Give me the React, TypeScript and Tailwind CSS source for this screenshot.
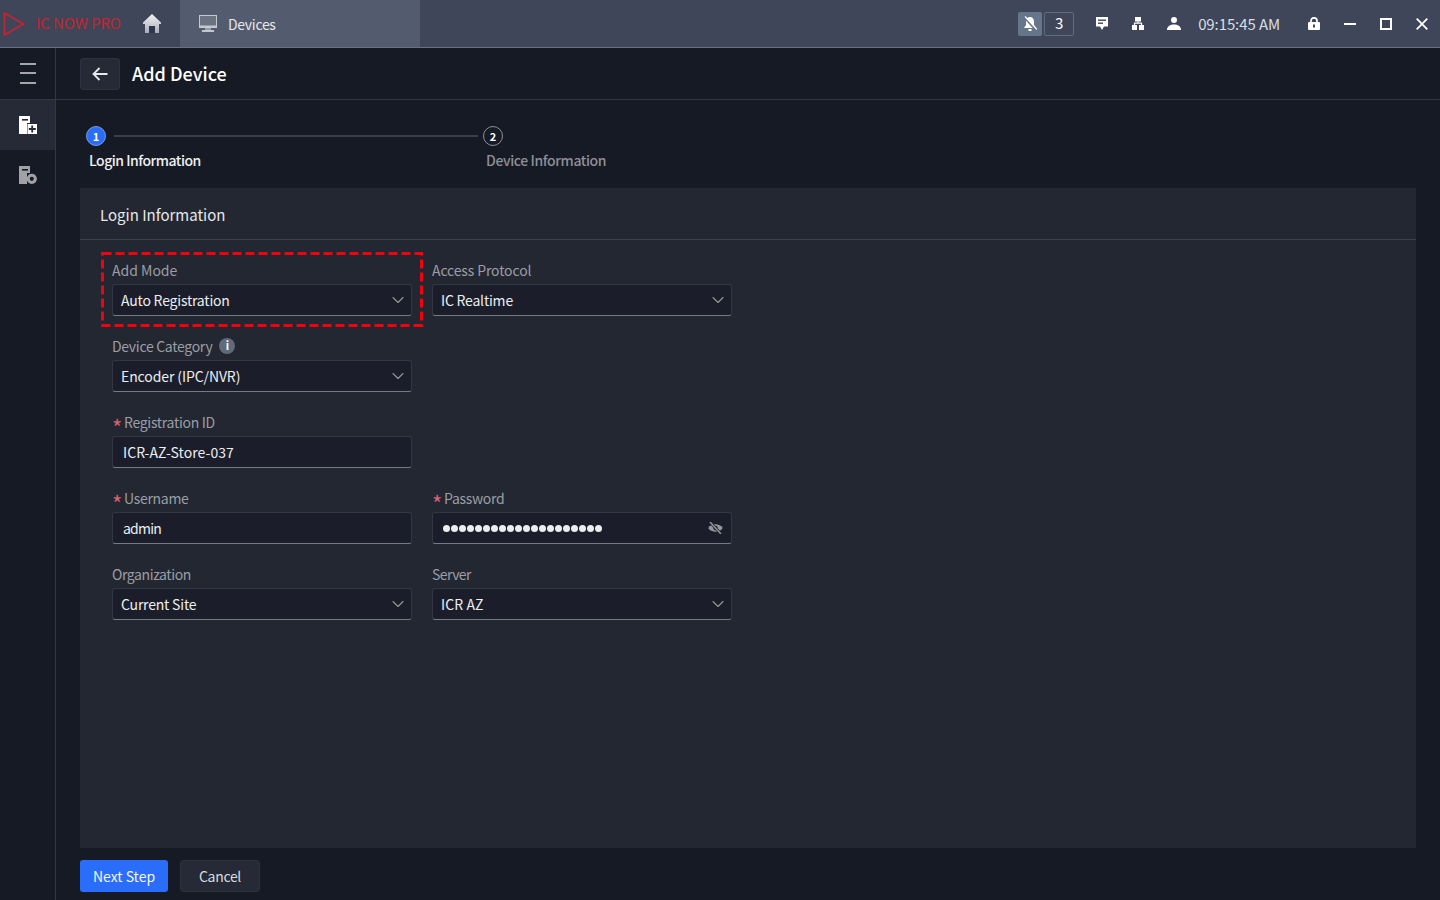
import { ChevronDown } from "lucide-react";
import React from "react";

const font = { fontFamily: '"Noto Sans CJK SC", "Noto Sans", sans-serif' };

function HomeIcon() {
  return (
    <svg width="18" height="19" viewBox="0 0 18 19" className="block">
      <defs>
        <linearGradient id="homeFill" x1="0" y1="0" x2="0" y2="1">
          <stop offset="0" stopColor="#f2f3f5" />
          <stop offset="1" stopColor="#a9adb6" />
        </linearGradient>
      </defs>
      <path d="M9 0 L18 8.5 L18 10 L16 10 V19 H2 V10 L0 10 L0 8.5 Z" fill="url(#homeFill)" />
      <rect x="6" y="12" width="6" height="7" fill="#2f3850" />
    </svg>
  );
}

function MonitorIcon() {
  return (
    <svg width="18" height="18" viewBox="0 0 18 18" className="block">
      <rect x="0.5" y="0.5" width="17" height="12" fill="#6b7282" stroke="#c4c7cd" />
      <rect x="0" y="10.5" width="18" height="2.5" fill="#c4c7cd" />
      <rect x="6" y="13" width="6" height="2" fill="#9a9ea8" />
      <rect x="3" y="15" width="12" height="2" fill="#c4c7cd" />
    </svg>
  );
}

function BellOff() {
  return (
    <svg width="14" height="16" viewBox="0 0 14 16" className="block">
      <path d="M7 1 C4 1 3 3.5 3 6 V9 L1 12 H13 L11 9 V6 C11 3.5 10 1 7 1 Z" fill="#fff" />
      <rect x="5.5" y="13" width="3" height="2" fill="#fff" />
      <path d="M1 1 L13 14" stroke="#64748b" strokeWidth="2" />
      <path d="M2 0.5 L14 13.5" stroke="#fff" strokeWidth="1.2" />
    </svg>
  );
}

function ChatIcon() {
  return (
    <svg width="12" height="13" viewBox="0 0 12 13" className="block">
      <path d="M0 0 H12 V9.5 H8 L6 13 L4 9.5 H0 Z" fill="#fff" />
      <rect x="2" y="2.5" width="8" height="1.4" fill="#3f4659" />
      <rect x="2" y="5.5" width="5" height="1.4" fill="#3f4659" />
    </svg>
  );
}

function NetIcon() {
  return (
    <svg width="12" height="13" viewBox="0 0 12 13" className="block">
      <rect x="3" y="0" width="6" height="4.5" fill="#fff" />
      <path d="M2.5 9 V6.2 H9.5 V9 M6 4.5 V6.2" stroke="#fff" strokeWidth="1.2" fill="none" />
      <rect x="0" y="8" width="5" height="5" fill="#fff" />
      <rect x="7" y="8" width="5" height="5" fill="#fff" />
    </svg>
  );
}

function UserIcon() {
  return (
    <svg width="14" height="13" viewBox="0 0 14 13" className="block">
      <circle cx="7" cy="3" r="3" fill="#fff" />
      <path d="M0 13 C0 9 3.5 7.5 7 7.5 C10.5 7.5 14 9 14 13 Z" fill="#fff" />
    </svg>
  );
}

function LockIcon() {
  return (
    <svg width="12" height="13" viewBox="0 0 12 13" className="block">
      <path d="M3 6 V3.8 C3 -0.2 9 -0.2 9 3.8 V6" stroke="#fff" strokeWidth="1.7" fill="none" />
      <rect x="0" y="5" width="12" height="8" rx="1" fill="#fff" />
      <rect x="5" y="7.5" width="2" height="3" fill="#3f4659" />
    </svg>
  );
}

function MinusIcon() {
  return (
    <svg width="12" height="12" viewBox="0 0 12 12" className="block">
      <rect x="0" y="5" width="12" height="2" fill="#fff" />
    </svg>
  );
}

function SquareIcon() {
  return (
    <svg width="12" height="12" viewBox="0 0 12 12" className="block">
      <rect x="1" y="1" width="10" height="10" fill="none" stroke="#fff" strokeWidth="2" />
    </svg>
  );
}

function CloseIcon() {
  return (
    <svg width="12" height="12" viewBox="0 0 12 12" className="block">
      <path d="M0.7 0.7 L11.3 11.3 M11.3 0.7 L0.7 11.3" stroke="#fff" strokeWidth="1.8" />
    </svg>
  );
}

function MenuIcon() {
  return (
    <svg width="16" height="21" viewBox="0 0 16 21" className="block">
      <rect y="0" width="16" height="2" fill="#a4a6ab" />
      <rect y="9" width="16" height="2" fill="#a4a6ab" />
      <rect y="19" width="16" height="2" fill="#a4a6ab" />
    </svg>
  );
}

function DeviceAddIcon() {
  return (
    <svg width="18" height="18" viewBox="0 0 18 18" className="block">
      <path d="M0 0 H11 V7 H8 V18 H0 Z" fill="#fff" />
      <rect x="3" y="3" width="6" height="1.6" fill="#262a36" />
      <rect x="8.5" y="8" width="9.5" height="10" fill="#fff" />
      <path d="M13.2 9.5 V16.5 M9.8 13 H16.8" stroke="#262a36" strokeWidth="1.8" />
    </svg>
  );
}

function DeviceGearIcon() {
  return (
    <svg width="18" height="18" viewBox="0 0 18 18" className="block">
      <path d="M0 0 H11 V7 H8 V18 H0 Z" fill="#a0a2a7" />
      <rect x="3" y="3" width="6" height="1.6" fill="#161a25" />
      <circle cx="12.8" cy="12.8" r="3.6" fill="none" stroke="#a0a2a7" strokeWidth="3" />
    </svg>
  );
}

function EyeOff() {
  return (
    <svg width="15" height="12" viewBox="0 0 15 12" className="block">
      <path d="M0.3 6 C3 1 12 1 14.7 6 C12 11 3 11 0.3 6 Z" fill="#93969c" />
      <circle cx="7.5" cy="6" r="2.2" fill="#1b1e2a" />
      <path d="M2 0 L13 12" stroke="#1b1e2a" strokeWidth="2.8" />
      <path d="M2 0 L13 12" stroke="#93969c" strokeWidth="1.5" />
    </svg>
  );
}

function Label({
  text,
  required,
  info,
  className = "tracking-[-0.3px]",
}: {
  text: string;
  required?: boolean;
  info?: boolean;
  className?: string;
}) {
  return (
    <div className="h-6 flex items-center text-sm text-[#9b9ea5]">
      {required && <span className="w-3 text-[22px] leading-none pt-[7px] text-[#d9606c]">*</span>}
      <span className={className}>{text}</span>
      {info && (
        <span className="ml-[7px] w-4 h-4 rounded-full bg-[#5f6b7a] text-white text-[11px] font-bold flex items-center justify-center">
          i
        </span>
      )}
    </div>
  );
}

function SelectField({
  label,
  value,
  info,
  labelClass,
  valueClass = "tracking-[-0.2px]",
}: {
  label: string;
  value: string;
  info?: boolean;
  labelClass?: string;
  valueClass?: string;
}) {
  return (
    <div className="w-[300px]">
      <Label text={label} info={info} className={labelClass} />
      <div className="mt-[2px] h-8 pl-2 pr-[3px] flex items-center justify-between rounded-[3px] border border-[#333743] border-b-[#777b85] bg-[#1b1e2a] text-sm text-[#eceef0]">
        <span className={valueClass}>{value}</span>
        <ChevronDown size={20} strokeWidth={1.3} className="text-[#94969b]" />
      </div>
    </div>
  );
}

function InputField({
  label,
  value,
  required,
  valueClass,
}: {
  label: string;
  value: string;
  required?: boolean;
  valueClass?: string;
}) {
  return (
    <div className="w-[300px]">
      <Label text={label} required={required} />
      <div className="mt-[2px] h-8 px-[10px] flex items-center rounded-[3px] border border-[#333743] border-b-[#777b85] bg-[#1b1e2a] text-sm text-[#eceef0]">
        <span className={valueClass}>{value}</span>
      </div>
    </div>
  );
}

export default function App() {
  return (
    <div className="w-[1440px] h-[900px] flex flex-col bg-[#161a25] overflow-hidden" style={font}>
      <div className="h-12 shrink-0 flex items-center bg-[#3f4659] border-b border-[#697082]">
        <div className="w-[180px] h-full flex items-center">
          <svg width="22" height="26" viewBox="0 0 22 26" className="block ml-[3px]">
            <path d="M1.5 2 L20.5 13 L1.5 24 Z" fill="none" stroke="#c4242f" strokeWidth="2" strokeLinejoin="round" />
          </svg>
          <span className="ml-[11px] text-[15px] tracking-[-0.1px] text-[#c4242f]">IC NOW PRO</span>
          <span className="ml-[22px]">
            <HomeIcon />
          </span>
        </div>
        <div className="w-[240px] h-full pl-[19px] flex items-center bg-[#535b6e] text-sm text-[#e6e8ea]">
          <MonitorIcon />
          <span className="ml-[11px] tracking-[-0.3px]">Devices</span>
        </div>
        <div className="flex-1 flex items-center justify-end pr-3 text-white">
          <div className="w-6 h-6 bg-[#66768a] rounded-[2px] flex items-center justify-center">
            <BellOff />
          </div>
          <div className="ml-[2px] w-[30px] h-6 rounded-[2px] border border-[#5d6c80] flex items-center justify-center text-[15px]">
            3
          </div>
          <span className="ml-[22px]"><ChatIcon /></span>
          <span className="ml-6"><NetIcon /></span>
          <span className="ml-[23px]"><UserIcon /></span>
          <span className="ml-[17px] pt-[2px] text-[15px] tracking-[-0.1px] text-[#d9dde3]">09:15:45 AM</span>
          <span className="ml-7"><LockIcon /></span>
          <span className="ml-6"><MinusIcon /></span>
          <span className="ml-6"><SquareIcon /></span>
          <span className="ml-6"><CloseIcon /></span>
        </div>
      </div>

      <div className="flex-1 flex min-h-0">
        <div className="w-14 shrink-0 border-r border-[#333743] flex flex-col">
          <div className="h-[52px] border-b border-[#333743] flex items-center justify-center">
            <MenuIcon />
          </div>
          <div className="h-[50px] bg-[#262a36] flex items-center justify-center">
            <DeviceAddIcon />
          </div>
          <div className="h-[50px] flex items-center justify-center">
            <DeviceGearIcon />
          </div>
        </div>

        <div className="flex-1 flex flex-col min-w-0">
          <div className="h-[52px] shrink-0 border-b border-[#333743] pl-6 flex items-center">
            <div className="w-10 h-8 rounded-[3px] bg-[#262a36] border border-[#2e323e] flex items-center justify-center">
              <svg width="16" height="14" viewBox="0 0 16 14" className="block">
                <path d="M15.5 7 H1.5 M7.5 1 L1.5 7 L7.5 13" fill="none" stroke="#e8e9eb" strokeWidth="1.8" />
              </svg>
            </div>
            <span className="ml-3 pb-[2px] text-lg font-medium text-white">Add Device</span>
          </div>

          <div className="h-[88px] shrink-0 pl-[30px] pt-[26px]">
            <div className="flex items-center">
              <div className="w-5 h-5 rounded-full bg-[#2a6dfb] border border-[#7a9ad8] text-white text-[11px] font-bold flex items-center justify-center">
                1
              </div>
              <div className="ml-2 w-[364px] h-[2px] bg-[#3a3e49]" />
              <div className="ml-[5px] w-5 h-5 rounded-full border border-[#8d9096] text-white text-[11px] font-bold flex items-center justify-center">
                2
              </div>
            </div>
            <div className="mt-1 flex text-sm font-medium">
              <span className="ml-[3px] w-[397px] tracking-[-0.5px] text-[#eef0f2]">Login Information</span>
              <span className="tracking-[-0.4px] text-[#8d9096]">Device Information</span>
            </div>
          </div>

          <div className="mx-6 h-[660px] shrink-0 bg-[#232732] flex flex-col">
            <div className="h-[52px] shrink-0 pl-5 pt-1 flex items-center border-b border-[#3b3f4a] text-[15px] text-[#e6e8ea]">
              Login Information
            </div>
            <div className="relative pl-8 pt-[18px] flex flex-col gap-[18px]">
              <svg width="322" height="75" viewBox="0 0 322 75" className="absolute left-[21px] top-3 block">
                <rect x="1.5" y="1.5" width="319" height="72" fill="none" stroke="#f5000f" strokeWidth="3" strokeDasharray="9 4" />
              </svg>
              <div className="flex gap-5">
                <SelectField label="Add Mode" value="Auto Registration" labelClass="tracking-normal" />
                <SelectField label="Access Protocol" value="IC Realtime" labelClass="tracking-[-0.13px]" />
              </div>
              <SelectField label="Device Category" value="Encoder (IPC/NVR)" valueClass="tracking-[-0.1px]" info />
              <InputField label="Registration ID" value="ICR-AZ-Store-037" required valueClass="tracking-[0.05px]" />
              <div className="flex gap-5">
                <InputField label="Username" value="admin" required valueClass="tracking-[-0.8px]" />
                <div className="w-[300px]">
                  <Label text="Password" required />
                  <div className="mt-[2px] h-8 pl-[10px] pr-2 flex items-center justify-between rounded-[3px] border border-[#333743] border-b-[#777b85] bg-[#1b1e2a]">
                    <div className="flex gap-px">
                      {Array.from({ length: 20 }).map((_, i) => (
                        <span key={i} className="w-[7px] h-[7px] rounded-full bg-[#eceef0]" />
                      ))}
                    </div>
                    <EyeOff />
                  </div>
                </div>
              </div>
              <div className="flex gap-5">
                <SelectField label="Organization" value="Current Site" labelClass="tracking-[-0.4px]" />
                <SelectField label="Server" value="ICR AZ" valueClass="tracking-[0.1px]" labelClass="tracking-[-0.6px]" />
              </div>
            </div>
          </div>

          <div className="pl-6 pt-3 flex gap-3 text-sm">
            <button className="w-[88px] h-8 rounded-[3px] bg-[#2a6dfb] text-[#f2f5fb]">Next Step</button>
            <button className="w-20 h-8 rounded-[3px] bg-[#262a36] border border-[#2e323e] text-[#d9dbde] tracking-[-0.3px]">Cancel</button>
          </div>
        </div>
      </div>
    </div>
  );
}
